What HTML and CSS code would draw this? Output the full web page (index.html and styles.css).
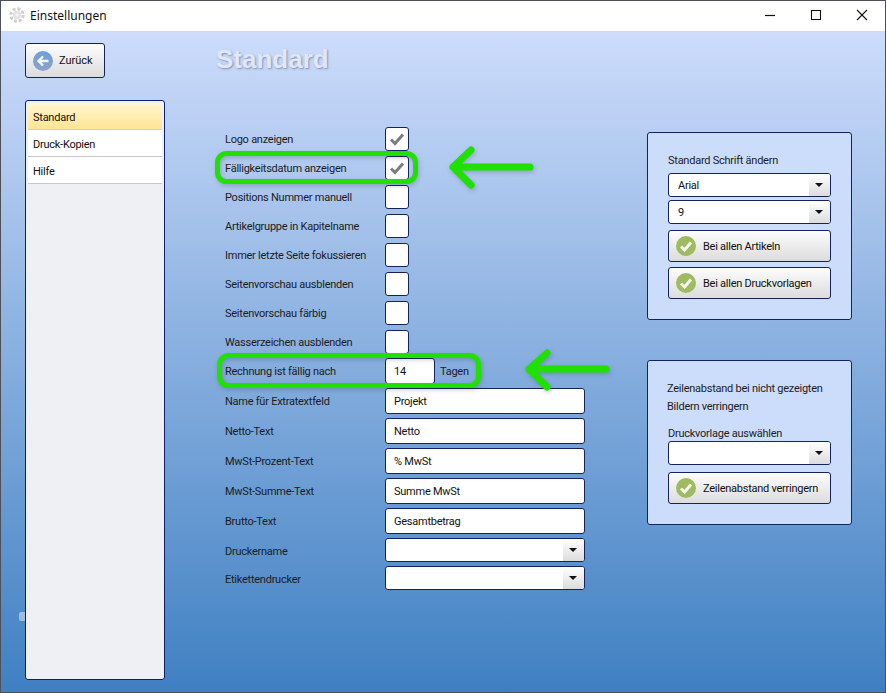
FILE: index.html
```html
<!DOCTYPE html>
<html lang="de">
<head>
<meta charset="utf-8">
<title>Einstellungen</title>
<link rel="stylesheet" href="styles.css">
</head>
<body>
<div class="window">
  <header class="titlebar">
    <svg class="app-icon" width="16" height="16" viewBox="0 0 16 16"><circle cx="8" cy="8" r="6.200" fill="none" stroke="#cfcfcf" stroke-width="3" stroke-dasharray="3 1.800"/><circle cx="8" cy="8" r="4.200" fill="#e2e2e2"/><circle cx="8" cy="8" r="1.800" fill="#f2f2f2"/></svg>
    <span class="window-title">Einstellungen</span>
    <div class="controls">
      <svg width="12" height="12" viewBox="0 0 12 12"><path d="M1 6.500h10" stroke="#111" stroke-width="1.200"/></svg>
      <svg width="12" height="12" viewBox="0 0 12 12"><rect x="1.500" y="1.500" width="9" height="9" fill="none" stroke="#111" stroke-width="1.100"/></svg>
      <svg width="12" height="12" viewBox="0 0 12 12"><path d="M1 1l10 10M11 1L1 11" stroke="#111" stroke-width="1.100"/></svg>
    </div>
  </header>
  <main class="content">
    <span class="edge-tab"></span>
    <aside class="left">
      <button class="btn back-btn">
        <svg width="20" height="20" viewBox="0 0 20 20"><defs><linearGradient id="bg" x1="0" y1="0" x2="0" y2="1"><stop offset="0" stop-color="#6f9fd8"/><stop offset="1" stop-color="#8aa3c8"/></linearGradient></defs><circle cx="10" cy="10" r="10" fill="url(#bg)"/><path d="M15.500 10H6M10 5.500L5.500 10l4.500 4.500" fill="none" stroke="#f2f5fa" stroke-width="2.400"/></svg>
        <span>Zurück</span>
      </button>
      <nav class="list">
        <div class="item active">Standard</div>
        <div class="item">Druck-Kopien</div>
        <div class="item">Hilfe</div>
      </nav>
    </aside>
    <section class="center">
      <h1 class="heading">Standard</h1>
      <div class="form">
        <div class="row check-row"><label>Logo anzeigen</label><span class="box"><svg width="16" height="14" viewBox="0 0 16 14"><path d="M2 7.500l4 4 8-9" fill="none" stroke="#7c7c7c" stroke-width="3"/></svg></span></div>
        <div class="row check-row"><label>Fälligkeitsdatum anzeigen</label><span class="box"><svg width="16" height="14" viewBox="0 0 16 14"><path d="M2 7.500l4 4 8-9" fill="none" stroke="#7c7c7c" stroke-width="3"/></svg></span></div>
        <div class="row check-row"><label>Positions Nummer manuell</label><span class="box"></span></div>
        <div class="row check-row"><label>Artikelgruppe in Kapitelname</label><span class="box"></span></div>
        <div class="row check-row"><label>Immer letzte Seite fokussieren</label><span class="box"></span></div>
        <div class="row check-row"><label>Seitenvorschau ausblenden</label><span class="box"></span></div>
        <div class="row check-row"><label>Seitenvorschau färbig</label><span class="box"></span></div>
        <div class="row check-row"><label>Wasserzeichen ausblenden</label><span class="box"></span></div>
        <div class="row text-row"><label>Rechnung ist fällig nach</label><span class="field short">14</span><span class="unit">Tagen</span></div>
        <div class="row text-row"><label>Name für Extratextfeld</label><span class="field">Projekt</span></div>
        <div class="row text-row"><label>Netto-Text</label><span class="field">Netto</span></div>
        <div class="row text-row"><label>MwSt-Prozent-Text</label><span class="field">% MwSt</span></div>
        <div class="row text-row"><label>MwSt-Summe-Text</label><span class="field">Summe MwSt</span></div>
        <div class="row text-row"><label>Brutto-Text</label><span class="field">Gesamtbetrag</span></div>
        <div class="row combo-row"><label>Druckername</label><span class="combo wide"><span class="combo-arrow"></span></span></div>
        <div class="row combo-row"><label>Etikettendrucker</label><span class="combo wide"><span class="combo-arrow"></span></span></div>
      </div>
    </section>
    <aside class="right">
      <section class="panel panel-font">
        <p class="panel-label">Standard Schrift ändern</p>
        <div class="combo"><span class="combo-text">Arial</span><span class="combo-arrow"></span></div>
        <div class="combo"><span class="combo-text">9</span><span class="combo-arrow"></span></div>
        <button class="btn action">
          <svg width="20" height="20" viewBox="0 0 20 20"><circle cx="10" cy="10" r="10" fill="#9fbb62"/><path d="M5 10.500l3.500 3.500 6.500-7.500" fill="none" stroke="#f4f6ea" stroke-width="3"/></svg>
          <span>Bei allen Artikeln</span>
        </button>
        <button class="btn action">
          <svg width="20" height="20" viewBox="0 0 20 20"><circle cx="10" cy="10" r="10" fill="#9fbb62"/><path d="M5 10.500l3.500 3.500 6.500-7.500" fill="none" stroke="#f4f6ea" stroke-width="3"/></svg>
          <span>Bei allen Druckvorlagen</span>
        </button>
      </section>
      <section class="panel panel-spacing">
        <p class="panel-text">Zeilenabstand bei nicht gezeigten<br>Bildern verringern</p>
        <p class="panel-label tight">Druckvorlage auswählen</p>
        <div class="combo"><span class="combo-arrow"></span></div>
        <button class="btn action">
          <svg width="20" height="20" viewBox="0 0 20 20"><circle cx="10" cy="10" r="10" fill="#9fbb62"/><path d="M5 10.500l3.500 3.500 6.500-7.500" fill="none" stroke="#f4f6ea" stroke-width="3"/></svg>
          <span>Zeilenabstand verringern</span>
        </button>
      </section>
    </aside>
  </main>
  <svg class="annotations" width="886" height="693" viewBox="0 0 886 693">
    <g fill="none" stroke="#20e000" stroke-linecap="round" stroke-linejoin="round">
      <rect x="217.500" y="153.500" width="198" height="28" rx="9" stroke-width="5"/>
      <rect x="219.500" y="355.500" width="259" height="30" rx="9" stroke-width="5"/>
      <path d="M530 167H453M471 150L453 167L471 185" stroke-width="7"/>
      <path d="M606 369H529M547 353L529 369L547 387" stroke-width="7"/>
    </g>
  </svg>
</div>
</body>
</html>
```
FILE: styles.css
```css
* { box-sizing: border-box; }
html, body { margin: 0; padding: 0; }
body { width: 886px; height: 693px; overflow: hidden; font-family: Roboto, "Liberation Sans", sans-serif; font-size: 11px; letter-spacing: -.25px; color: #111; }
.window { position: relative; width: 886px; height: 693px; display: flex; flex-direction: column; border: 1px solid #4d5058; }
.titlebar { height: 30px; flex: none; background: #fff; display: flex; align-items: center; padding: 0 0 2px 8px; }
.app-icon { margin-right: 5px; }
.window-title { font-family: "Noto Sans", sans-serif; font-size: 12px; letter-spacing: 0; color: #111; }
.controls { margin-left: auto; display: flex; gap: 34px; padding-right: 17px; }
.content { position: relative; flex: 1; display: flex; background: linear-gradient(#cddcfb, #3f80c2); }
.edge-tab { position: absolute; left: 18px; top: 581px; width: 7px; height: 9px; border-radius: 2px 0 0 2px; background: rgba(225, 230, 240, .55); }
.left { width: 164px; flex: none; padding: 12px 0 0 24px; display: flex; flex-direction: column; }
.btn { display: flex; align-items: center; font: inherit; letter-spacing: inherit; color: #111; background: linear-gradient(#fdfdfd, #dcdcdc); border: 1px solid #14235f; border-radius: 3px; cursor: pointer; }
.back-btn { width: 80px; height: 35px; padding: 0 0 0 7px; gap: 6px; letter-spacing: 0; }
.list { position: relative; z-index: 1; margin-top: 22px; width: 140px; height: 580px; background: #eff0f3; border: 1px solid #0d1f6d; border-radius: 3px; padding: 2px; }
.item { height: 27px; padding: 2px 0 0 5px; line-height: 26px; background: #fff; border-bottom: 1px solid #c8c8c8; overflow: hidden; }
.item.active { background: linear-gradient(#fff7d2, #ffe594); border-bottom-color: #d8d0b0; }
.center { width: 431px; margin-left: 51px; flex: none; }
.heading { margin: 0; height: 93px; padding-top: 13px; line-height: 30px; font-family: "Liberation Sans", sans-serif; font-size: 26px; font-weight: 700; letter-spacing: 0; color: #dfe7f8; text-shadow: 1px 1px 2px rgba(90, 100, 130, .6); }
.form { padding-left: 9px; display: flex; flex-direction: column; }
.row { display: flex; align-items: center; }
.row label { width: 160px; flex: none; color: #1c1c1c; }
.check-row { height: 29px; }
.check-row label, .combo-row label { padding-top: 2px; }
.text-row { height: 30px; }
.combo-row { height: 28px; }
.box { width: 24px; height: 24px; display: flex; align-items: center; justify-content: center; background: #fff; border: 1px solid #14235f; border-radius: 3px; }
.field { width: 200px; height: 26px; padding: 2px 0 0 8px; line-height: 22px; background: #fff; border: 1px solid #14235f; border-radius: 3px; }
.field.short { width: 50px; }
.unit { margin-left: 5px; color: #1c1c1c; }
.combo { position: relative; width: 163px; height: 24px; margin-bottom: 3px; background: #fff; border: 1px solid #14235f; border-radius: 3px; line-height: 24px; overflow: hidden; }
.combo.wide { width: 200px; margin-bottom: 0; display: block; }
.combo-text { padding-left: 9px; }
.combo-arrow { position: absolute; right: 0; top: 0; bottom: 0; width: 21px; background: linear-gradient(#fff, #dcdcdc); }
.combo-arrow::after { content: ""; position: absolute; left: 6px; top: 9px; border-style: solid; border-width: 4px 4px 0; border-color: #111 transparent transparent; }
.right { width: 205px; flex: none; padding-top: 101px; display: flex; flex-direction: column; gap: 40px; }
.panel { background: #ccdcfb; border: 1px solid #14235f; border-radius: 3px; padding-left: 20px; }
.panel-font { height: 188px; padding-top: 20px; }
.panel-spacing { height: 165px; padding-top: 19px; }
.panel p { margin: 0; color: #1c1c1c; }
.panel-label { height: 20px; line-height: 16px; }
.panel-label.tight { height: 16px; padding-top: 1px; }
.panel-text { height: 45px; line-height: 18px; }
.panel-spacing .panel-text { margin-left: -1px; }
.action { width: 163px; height: 32px; margin: 0 0 5px; padding: 0 0 0 7px; gap: 7px; }
.combo + .action { margin-top: 6px; }
.panel-spacing .combo + .action { margin-top: 7px; }
.annotations { position: absolute; left: -1px; top: -1px; pointer-events: none; filter: drop-shadow(1px 2px 2px rgba(40, 60, 60, .25)); }
```
